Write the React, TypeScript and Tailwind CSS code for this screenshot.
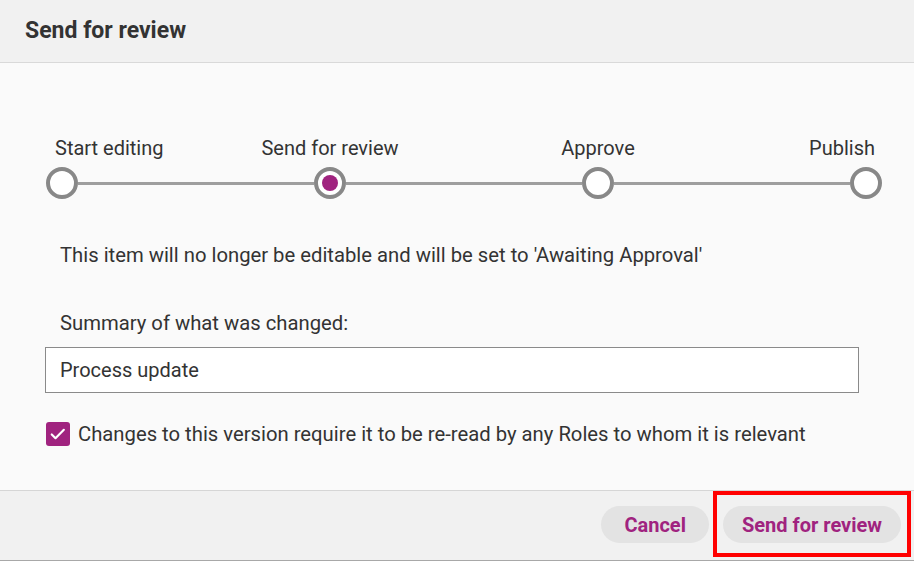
import React from "react";

const steps = [
  { label: "Start editing", align: "start" },
  { label: "Send for review", align: "center", active: true },
  { label: "Approve", align: "center" },
  { label: "Publish", align: "end" },
];

function Step({ label, align, active }: { label: string; align: string; active?: boolean }) {
  const alignCls =
    align === "start" ? "items-start" : align === "end" ? "items-end" : "items-center";
  const labelCls =
    align === "start" ? "ml-[9px]" : align === "end" ? "mr-[7px]" : "";
  return (
    <div className={`flex flex-col ${alignCls} w-[32px] shrink-0`}>
      <div className={`whitespace-nowrap text-[20px] leading-[24px] text-[#333] ${labelCls}`}>{label}</div>
      <div className="mt-[7px] flex h-[32px] w-[32px] items-center justify-center rounded-full border-[4px] border-[#888888] bg-white">
        {active && <div className="h-[16px] w-[16px] rounded-full bg-[#a0237f]" />}
      </div>
    </div>
  );
}

export default function App() {
  return (
    <div
      className="flex h-[562px] w-[914px] flex-col bg-white text-[#333]"
      style={{ fontFamily: "Roboto, 'Liberation Sans', sans-serif" }}
    >
      <div className="flex h-[63px] shrink-0 items-center border-b border-[#d9d9d9] bg-[#f1f1f1] px-[25px]">
        <h1 className="text-[23px] font-bold text-[#333]">Send for review</h1>
      </div>

      <div className="flex h-[427px] shrink-0 flex-col bg-[#fafafa] px-[45px] pt-[73px]">
        <div className="ml-[1px] flex w-[836px] items-end">
          {steps.map((s, i) => (
            <React.Fragment key={s.label}>
              {i > 0 && <div className="mb-[14.5px] h-[3px] flex-1 bg-[#9e9e9e]" />}
              <Step label={s.label} align={s.align} active={s.active} />
            </React.Fragment>
          ))}
        </div>

        <p className="mt-[44px] pl-[15px] text-[20.25px] leading-[24px] text-[#333]">
          This item will no longer be editable and will be set to 'Awaiting Approval'
        </p>

        <p className="mt-[44px] pl-[15px] text-[20.25px] leading-[24px] text-[#333]">
          Summary of what was changed:
        </p>

        <div className="mt-[12px] flex h-[46px] w-[814px] items-center border border-[#8a8a8a] bg-white pl-[14px] text-[20px] text-[#333]">
          Process update
        </div>

        <label className="mt-[29px] flex items-center gap-[8px] pl-[1px]">
          <span className="flex h-[24px] w-[24px] shrink-0 items-center justify-center rounded-[3px] bg-[#a0237f]">
            <svg viewBox="0 0 24 24" className="h-[20px] w-[20px]" fill="none" stroke="white" strokeWidth="2.6" strokeLinecap="round" strokeLinejoin="round">
              <path d="M4.5 12.5l4.5 4.5 10-10" />
            </svg>
          </span>
          <span className="whitespace-nowrap text-[20.25px] leading-[24px] text-[#333]">
            Changes to this version require it to be re-read by any Roles to whom it is relevant
          </span>
        </label>
      </div>

      <div className="flex h-[71px] shrink-0 items-start justify-end border-t border-b border-[#d6d6d6] border-b-[#a8a8a8] bg-[#f1f1f1] pr-[3px]">
        <button className="mt-[15px] h-[37px] rounded-full bg-[#e3e3e3] px-[23px] text-[20px] font-bold text-[#a0237f]">
          Cancel
        </button>
        <div className="ml-[4px] border-[4px] border-[#ff0000] px-[6px] pt-[11px] pb-[10px]">
          <button className="h-[37px] rounded-full bg-[#e3e3e3] px-[19px] text-[20px] font-bold text-[#a0237f]">
            Send for review
          </button>
        </div>
      </div>
    </div>
  );
}
